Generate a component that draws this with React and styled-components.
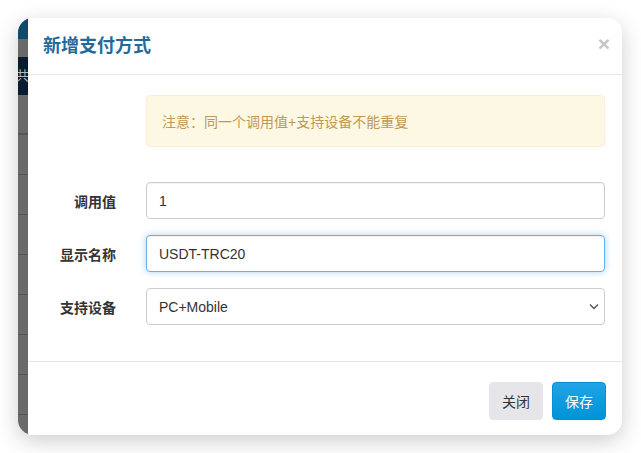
import React from 'react';
import styled, { createGlobalStyle } from 'styled-components';

const GlobalStyle = createGlobalStyle`
  body {
    margin: 0;
    background: #ffffff;
    font-family: "Liberation Sans", "Noto Sans CJK SC", sans-serif;
  }
`;

const backdropRows = [0, 1, 2, 3, 4, 5, 6, 7, 8];

function App() {
  return (
    <Page>
      <GlobalStyle />
      <Window>
        <Backdrop>
          <TopBar />
          <GreyGap />
          <NavBar>共</NavBar>
          {backdropRows.map((row) => (
            <BackdropRow key={row} thick={row === 0} />
          ))}
        </Backdrop>

        <Modal>
          <Header>
            <Title>新增支付方式</Title>
            <Close>×</Close>
          </Header>

          <Body>
            <Grid>
              <span />
              <Alert>注意：同一个调用值+支持设备不能重复</Alert>
            </Grid>

            <Form>
              <Grid>
                <Label>调用值</Label>
                <Input defaultValue="1" />
              </Grid>
              <Grid>
                <Label>显示名称</Label>
                <Input defaultValue="USDT-TRC20" focused />
              </Grid>
              <Grid>
                <Label>支持设备</Label>
                <SelectBox>
                  <span>PC+Mobile</span>
                  <svg width="10" height="7" viewBox="0 0 10 7">
                    <path d="M1 1.5 L5 5.5 L9 1.5" fill="none" stroke="#555" strokeWidth="1.4" />
                  </svg>
                </SelectBox>
              </Grid>
            </Form>
          </Body>

          <Footer>
            <Button>关闭</Button>
            <Button primary>保存</Button>
          </Footer>
        </Modal>
      </Window>
    </Page>
  );
}

const Page = styled.div`
  padding: 18px;
`;

const Window = styled.div`
  width: 604px;
  height: 417px;
  display: flex;
  border-radius: 15px;
  overflow: hidden;
  box-shadow: 0 6px 22px rgba(0, 0, 0, 0.2);
`;

const Backdrop = styled.div`
  width: 10px;
  flex-shrink: 0;
  display: flex;
  flex-direction: column;
  background: #6a6a6a;
  overflow: hidden;

  & > * {
    flex-shrink: 0;
  }
`;

const TopBar = styled.div`
  height: 21px;
  background: #0d4a6c;
`;

const GreyGap = styled.div`
  height: 18px;
  background: #6a6a6a;
`;

const NavBar = styled.div`
  height: 38px;
  background: #0a1c30;
  color: #b5b8bd;
  font-size: 13px;
  line-height: 38px;
  white-space: nowrap;
  text-indent: -2px;
`;

const BackdropRow = styled.div`
  height: 40px;
  box-sizing: border-box;
  border-bottom: ${(p) => (p.thick ? '2px' : '1px')} solid #565656;
`;

const Modal = styled.div`
  flex: 1;
  background: #ffffff;
  display: flex;
  flex-direction: column;
`;

const Header = styled.div`
  height: 57px;
  flex-shrink: 0;
  box-sizing: border-box;
  border-bottom: 1px solid #e5e5e5;
  display: flex;
  align-items: center;
  justify-content: space-between;
  padding: 0 12px 4px 15px;
`;

const Title = styled.div`
  font-size: 18px;
  font-weight: bold;
  color: #236a9a;
`;

const Close = styled.div`
  font-size: 21px;
  font-weight: bold;
  color: #c6c6c6;
  line-height: 1;
  margin-top: -2px;
`;

const Body = styled.div`
  flex: 1;
  padding: 20px 17px 0 15px;
`;

const Grid = styled.div`
  display: grid;
  grid-template-columns: 73px 1fr;
  column-gap: 30px;
  align-items: center;
`;

const Alert = styled.div`
  height: 52px;
  box-sizing: border-box;
  display: flex;
  align-items: center;
  padding: 0 15px;
  background: #fcf8e3;
  border: 1px solid #fbeed5;
  border-radius: 4px;
  color: #c09853;
  font-size: 14px;
`;

const Form = styled.div`
  margin-top: 35px;
  display: flex;
  flex-direction: column;
  gap: 16px;
`;

const Label = styled.label`
  text-align: right;
  font-size: 14px;
  font-weight: bold;
  color: #333333;
`;

const Input = styled.input`
  height: 37px;
  box-sizing: border-box;
  width: 100%;
  padding: 0 12px;
  font-family: "Liberation Sans", "Noto Sans CJK SC", sans-serif;
  font-size: 14px;
  color: #333333;
  border-radius: 4px;
  outline: none;
  border: 1px solid ${(p) => (p.focused ? '#66afe9' : '#cccccc')};
  box-shadow: ${(p) =>
    p.focused
      ? 'inset 0 1px 1px rgba(0,0,0,.05), 0 0 7px rgba(102,175,233,.55)'
      : 'inset 0 1px 1px rgba(0,0,0,.05)'};
`;

const SelectBox = styled.div`
  height: 37px;
  box-sizing: border-box;
  display: flex;
  align-items: center;
  justify-content: space-between;
  padding: 0 5px 0 12px;
  font-size: 14px;
  color: #333333;
  border: 1px solid #cccccc;
  border-radius: 4px;
`;

const Footer = styled.div`
  height: 74px;
  flex-shrink: 0;
  box-sizing: border-box;
  border-top: 1px solid #e5e5e5;
  display: flex;
  justify-content: flex-end;
  align-items: flex-start;
  gap: 9px;
  padding: 20px 16px 0 0;
`;

const Button = styled.button`
  width: 54px;
  height: 38px;
  border-radius: 4px;
  font-family: "Liberation Sans", "Noto Sans CJK SC", sans-serif;
  font-size: 14px;
  cursor: pointer;
  color: ${(p) => (p.primary ? '#ffffff' : '#333333')};
  border: 1px solid ${(p) => (p.primary ? '#0a8fd2' : '#e6e6ea')};
  background: ${(p) =>
    p.primary ? 'linear-gradient(#20a4e6, #0093d8)' : '#e6e6ea'};
`;

export default App;
